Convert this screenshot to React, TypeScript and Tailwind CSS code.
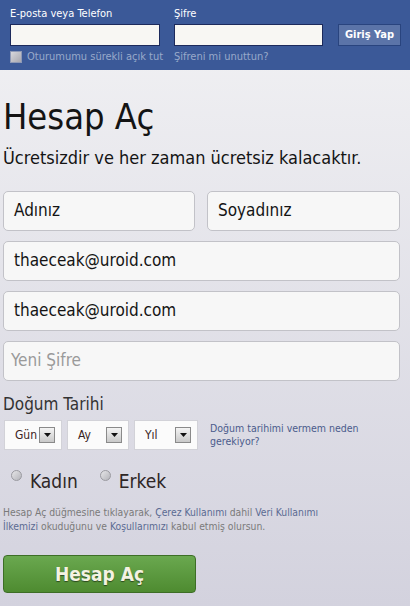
const font = { fontFamily: '"DejaVu Sans Condensed", "Liberation Sans", sans-serif' }

function SelectBox({ label, width }: { label: string; width: string }) {
  return (
    <div
      className={`${width} h-[30px] flex items-center justify-between pl-[10px] pr-[6px] bg-[#fbfbfb] border border-[#d2d2d8]`}
    >
      <span className="text-[12px] text-[#3a2424]">{label}</span>
      <span className="w-[16px] h-[16px] flex items-center justify-center border border-[#8a8a8a] bg-gradient-to-b from-[#f4f4f4] to-[#c9c9c9]">
        <svg width="7" height="4" viewBox="0 0 7 4">
          <path d="M0 0 L7 0 L3.5 4 Z" fill="#111" />
        </svg>
      </span>
    </div>
  )
}

function Radio({ label }: { label: string }) {
  return (
    <label className="flex items-start gap-[8px]">
      <span className="mt-[1px] w-[11px] h-[11px] rounded-full border border-[#9a9aa0] bg-gradient-to-br from-[#e6e6e8] to-[#b4b4ba]" />
      <span className="text-[19px] leading-[24px] text-[#2e2626]">{label}</span>
    </label>
  )
}

export default function App() {
  return (
    <div
      className="w-[410px] h-[606px] overflow-hidden bg-gradient-to-b from-[#f2f2f4] to-[#d3d2de]"
      style={font}
    >
      {/* Login bar */}
      <div className="h-[70px] bg-[#3b5998] pt-[7px] pl-[10px] flex">
        <div className="w-[150px]">
          <p className="text-[11px] leading-[14px] text-white">E-posta veya Telefon</p>
          <div className="mt-[3px] h-[22px] bg-[#f8f7f3] border border-[#1d2a5b]" />
          <div className="mt-[4px] flex items-center gap-[5px] whitespace-nowrap">
            <span className="shrink-0 w-[12px] h-[12px] border border-[#8e99b6] bg-gradient-to-br from-[#d8d8dc] to-[#a8a8b0]" />
            <span className="text-[11px] leading-[14px] text-[#98a9ca]">Oturumumu sürekli açık tut</span>
          </div>
        </div>
        <div className="w-[149px] ml-[14px]">
          <p className="text-[11px] leading-[14px] text-white">Şifre</p>
          <div className="mt-[3px] h-[22px] bg-[#f8f7f3] border border-[#1d2a5b]" />
          <p className="mt-[4px] text-[11px] leading-[14px] text-[#98a9ca]">Şifreni mi unuttun?</p>
        </div>
        <button className="ml-[15px] mt-[17px] h-[22px] w-[63px] bg-[#5b74a8] border border-[#29447e] text-white text-[11px] font-bold">
          Giriş Yap
        </button>
      </div>

      {/* Sign up form */}
      <div className="px-[3px]">
        <h1 className="mt-[27px] text-[36px] leading-[40px] text-[#141414]">Hesap Aç</h1>
        <p className="mt-[10px] text-[18px] leading-[22px] text-[#141414]">
          Ücretsizdir ve her zaman ücretsiz kalacaktır.
        </p>

        <div className="mt-[22px] w-[397px] flex flex-col gap-[10px]">
          <div className="flex gap-[12px]">
            <div className="w-[193px] h-[40px] rounded-[5px] border border-[#c2c2c8] bg-[#f7f7f7] pl-[10px] flex items-center text-[17px] text-[#141414]">
              Adınız
            </div>
            <div className="w-[194px] h-[40px] rounded-[5px] border border-[#c2c2c8] bg-[#f7f7f7] pl-[10px] flex items-center text-[17px] text-[#141414]">
              Soyadınız
            </div>
          </div>
          <div className="h-[40px] rounded-[5px] border border-[#c2c2c8] bg-[#f7f7f7] pl-[10px] flex items-center text-[17px] text-[#141414]">
            thaeceak@uroid.com
          </div>
          <div className="h-[40px] rounded-[5px] border border-[#c2c2c8] bg-[#f7f7f7] pl-[10px] flex items-center text-[17px] text-[#141414]">
            thaeceak@uroid.com
          </div>
          <div className="h-[40px] rounded-[5px] border border-[#c2c2c8] bg-[#f7f7f7] pl-[7px] flex items-center text-[17px] text-[#9a9a9a]">
            Yeni Şifre
          </div>
        </div>

        <p className="mt-[12px] text-[17px] leading-[22px] text-[#333]">Doğum Tarihi</p>
        <div className="mt-[5px] ml-[1px] flex items-center">
          <div className="flex gap-[5px]">
            <SelectBox label="Gün" width="w-[58px]" />
            <SelectBox label="Ay" width="w-[62px]" />
            <SelectBox label="Yıl" width="w-[64px]" />
          </div>
          <p className="ml-[12px] text-[10.5px] leading-[13px] text-[#4b5b8c]">
            Doğum tarihimi vermem neden
            <br />
            gerekiyor?
          </p>
        </div>

        <div className="mt-[19px] ml-[8px] flex gap-[22px]">
          <Radio label="Kadın" />
          <Radio label="Erkek" />
        </div>

        <p className="mt-[12px] text-[10.3px] leading-[14px] text-[#7a7a7a]">
          Hesap Aç düğmesine tıklayarak, <span className="text-[#5a6a92]">Çerez Kullanımı</span> dahil{' '}
          <span className="text-[#5a6a92]">Veri Kullanımı</span>
          <br />
          <span className="text-[#5a6a92]">İlkemizi</span> okuduğunu ve{' '}
          <span className="text-[#5a6a92]">Koşullarımızı</span> kabul etmiş olursun.
        </p>

        <button className="mt-[22px] w-[193px] h-[38px] rounded-[4px] border border-[#3d6e26] bg-gradient-to-b from-[#6aa84f] to-[#4e8b30] text-[19px] font-bold text-[#f4f2e2] [text-shadow:0_1px_1px_rgba(0,0,0,0.5)]">
          Hesap Aç
        </button>
      </div>
    </div>
  )
}
